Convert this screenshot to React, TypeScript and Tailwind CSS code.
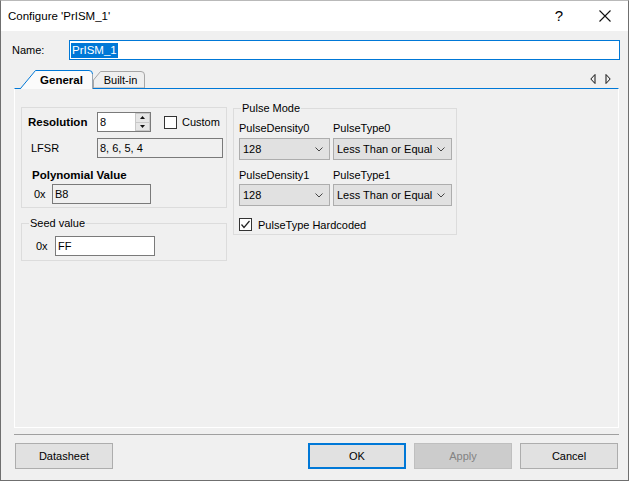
import { ReactNode } from "react";

const GroupBox = ({ title, className, children }: { title?: string; className?: string; children: ReactNode }) => (
  <div className={`relative border border-[#dcdcdc] ${className ?? ""}`}>
    {title && (
      <span className="absolute -top-[8px] left-[7px] px-[1px] leading-[14px] bg-[#f0f0f0]">{title}</span>
    )}
    {children}
  </div>
);

const TextBox = ({ value, readOnly, className }: { value: string; readOnly?: boolean; className?: string }) => (
  <div
    className={`h-[20px] border border-[#7a7a7a] flex items-center pl-[2px] leading-[14px] ${
      readOnly ? "bg-[#f0f0f0]" : "bg-white"
    } ${className ?? ""}`}
  >
    {value}
  </div>
);

const Select = ({ value, className }: { value: string; className?: string }) => (
  <div className={`h-[22px] bg-[#e1e1e1] border border-[#adadad] flex items-center pl-[3px] pr-[6px] ${className ?? ""}`}>
    <span className="flex-1 whitespace-nowrap overflow-hidden">{value}</span>
    <svg width="8" height="5" viewBox="0 0 8 5" className="shrink-0 ml-[2px]">
      <polyline points="0.5,0.5 4,4 7.5,0.5" fill="none" stroke="#444" strokeWidth="1" />
    </svg>
  </div>
);

const CheckBox = ({ checked }: { checked?: boolean }) => (
  <div className="w-[13px] h-[13px] border border-[#333] bg-white flex items-center justify-center shrink-0">
    {checked && (
      <svg width="11" height="11" viewBox="0 0 11 11">
        <polyline points="1.5,5.5 4,8.5 9.5,2" fill="none" stroke="#222" strokeWidth="1.2" />
      </svg>
    )}
  </div>
);

const Button = ({ label, variant }: { label: string; variant?: "default" | "disabled" }) => (
  <div
    className={`w-[98px] h-[26px] flex items-center justify-center ${
      variant === "default"
        ? "bg-[#e1e1e1] border-2 border-[#0078d7]"
        : variant === "disabled"
        ? "bg-[#cccccc] border border-[#bfbfbf] text-[#838383]"
        : "bg-[#e1e1e1] border border-[#adadad]"
    }`}
  >
    {label}
  </div>
);

export default function App() {
  return (
    <div className="w-[629px] h-[481px] bg-[#f0f0f0] border border-[#6f6f6f] border-t-[#b9b9b9] flex flex-col overflow-hidden text-[11px] leading-[14px] text-black font-['Liberation_Sans',Arial,sans-serif]">
      {/* title bar */}
      <div className="h-[30px] bg-white flex items-center shrink-0">
        <span className="pl-[7px] text-[11.5px]">Configure 'PrISM_1'</span>
        <div className="ml-auto flex h-full">
          <div className="w-[46px] flex items-center justify-center text-[15px]">?</div>
          <div className="w-[46px] flex items-center justify-center">
            <svg width="12" height="12" viewBox="0 0 12 12">
              <path d="M0.5 0.5 L11.5 11.5 M11.5 0.5 L0.5 11.5" stroke="#111" strokeWidth="1.1" />
            </svg>
          </div>
        </div>
      </div>

      {/* name row */}
      <div className="mt-[9px] h-[20px] flex items-center">
        <span className="pl-[11px] w-[68px]">Name:</span>
        <div className="w-[551px] h-[20px] bg-white border border-[#0078d7] flex items-center pl-[1px]">
          <span className="bg-[#0078d7] text-white px-[1px] leading-[15px] text-[11.5px]">PrISM_1</span>
        </div>
      </div>

      {/* tabs + panel */}
      <div className="ml-[13px] w-[605px] mt-[10px]">
        <div className="h-[18px] flex items-end pl-[6px]">
          <div className="relative z-10 w-[73px] h-[19px] -mb-px flex items-center justify-center pl-[10px] font-bold text-[11.5px]">
            <svg width="73" height="19" viewBox="0 0 73 19" className="absolute inset-0">
              <path d="M0.5 19 L15.5 0.5 L69 0.5 Q72.5 0.5 72.5 4 L72.5 19 Z" fill="#fbfbfb" />
              <path d="M0.5 18.5 L15.5 0.5 L69 0.5 Q72.5 0.5 72.5 4" fill="none" stroke="#0078d7" />
              <path d="M72.5 4 L72.5 19" stroke="#9aa7b3" />
            </svg>
            <span className="relative">General</span>
          </div>
          <div className="relative w-[52px] h-[17px] flex items-center justify-center pl-[3px]">
            <svg width="52" height="17" viewBox="0 0 52 17" className="absolute inset-0">
              <path d="M0.5 9 L7.5 0.5 L48 0.5 Q51.5 0.5 51.5 4 L51.5 17 L0.5 17 Z" fill="#efefef" stroke="#a6a6a6" />
            </svg>
            <span className="relative">Built-in</span>
          </div>
          <div className="ml-auto flex items-center gap-[9px] pr-[8px] self-center">
            <svg width="6" height="10" viewBox="0 0 6 10">
              <polygon points="5,0.5 5,9.5 0.8,5" fill="none" stroke="#111" />
            </svg>
            <svg width="6" height="10" viewBox="0 0 6 10">
              <polygon points="1,0.5 1,9.5 5.2,5" fill="none" stroke="#111" />
            </svg>
          </div>
        </div>

        <div className="h-[340px] border border-white border-t-[#0078d7] flex items-start gap-[6px] pl-[6px] pt-[18px]">
          {/* left column */}
          <div className="w-[206px] flex flex-col">
            <GroupBox className="h-[101px] pt-[4px]">
              <div className="h-[20px] flex items-center">
                <span className="w-[75px] pl-[6px] font-bold text-[11.5px]">Resolution</span>
                <div className="w-[54px] h-[20px] bg-white border border-[#7a7a7a] flex">
                  <span className="flex-1 pl-[2px] leading-[18px]">8</span>
                  <div className="w-[15px] flex flex-col">
                    <div className="flex-1 bg-[#e6e6e6] border border-[#c8c8c8] flex items-center justify-center">
                      <svg width="5" height="3" viewBox="0 0 5 3">
                        <polygon points="0,3 5,3 2.5,0" fill="#111" />
                      </svg>
                    </div>
                    <div className="flex-1 bg-[#e6e6e6] border border-t-0 border-[#c8c8c8] flex items-center justify-center">
                      <svg width="5" height="3" viewBox="0 0 5 3">
                        <polygon points="0,0 5,0 2.5,3" fill="#111" />
                      </svg>
                    </div>
                  </div>
                </div>
                <div className="ml-[13px] flex items-center gap-[5px]">
                  <CheckBox />
                  <span>Custom</span>
                </div>
              </div>
              <div className="mt-[6px] h-[20px] flex items-center">
                <span className="w-[75px] pl-[9px]">LFSR</span>
                <TextBox value="8, 6, 5, 4" readOnly className="w-[126px]" />
              </div>
              <div className="mt-[9px] h-[16px] flex items-center pl-[10px] font-bold text-[11.5px]">Polynomial Value</div>
              <div className="mt-[1px] h-[20px] flex items-center">
                <span className="w-[30px] pl-[12px]">0x</span>
                <TextBox value="B8" readOnly className="w-[99px]" />
              </div>
            </GroupBox>

            <GroupBox title="Seed value" className="mt-[15px] h-[38px] pt-[12px]">
              <div className="h-[20px] flex items-center">
                <span className="w-[33px] pl-[14px]">0x</span>
                <TextBox value="FF" className="w-[100px]" />
              </div>
            </GroupBox>
          </div>

          {/* pulse mode */}
          <GroupBox title="Pulse Mode" className="mt-[1px] w-[224px] h-[127px] pt-[12px] pl-[5px]">
            <div className="grid grid-cols-[91px_119px] gap-x-[3px]">
              <span className="h-[14px]">PulseDensity0</span>
              <span className="h-[14px]">PulseType0</span>
              <Select value="128" className="mt-[3px]" />
              <Select value="Less Than or Equal" className="mt-[3px]" />
              <span className="h-[14px] mt-[8px]">PulseDensity1</span>
              <span className="h-[14px] mt-[8px]">PulseType1</span>
              <Select value="128" className="mt-[2px]" />
              <Select value="Less Than or Equal" className="mt-[2px]" />
            </div>
            <div className="mt-[12px] h-[13px] flex items-center gap-[6px]">
              <CheckBox checked />
              <span>PulseType Hardcoded</span>
            </div>
          </GroupBox>
        </div>

        {/* separator */}
        <div className="mt-[6px] h-px bg-[#a0a0a0]" />

        {/* buttons */}
        <div className="mt-[8px] flex items-center pl-[1px] pr-[1px]">
          <Button label="Datasheet" />
          <div className="ml-auto flex gap-[8px]">
            <Button label="OK" variant="default" />
            <Button label="Apply" variant="disabled" />
            <Button label="Cancel" />
          </div>
        </div>
      </div>
    </div>
  );
}
